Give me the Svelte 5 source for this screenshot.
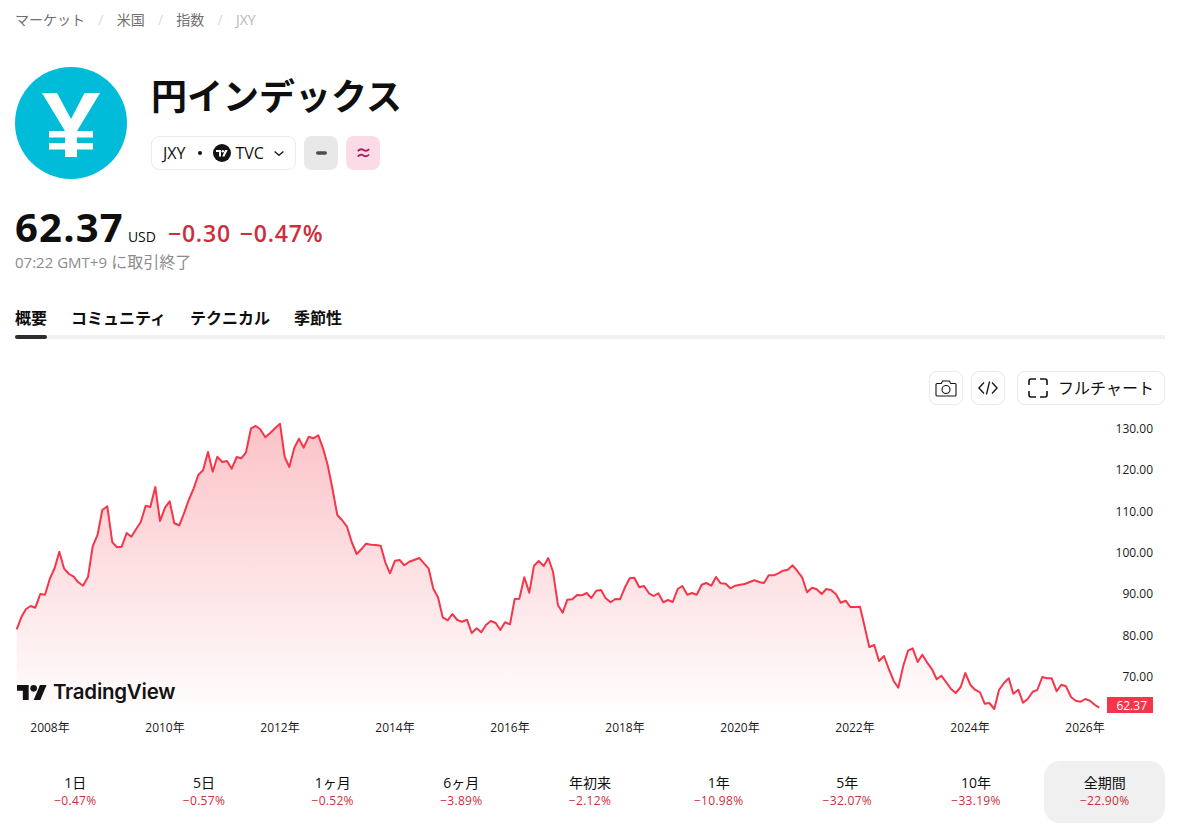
<script>
	// Points were read off the chart as [x, y] pairs from three crops (3x scale),
	// seg() brings them back to page pixels.
	function seg(ox, oy, raw) {
		const out = [];
		for (let i = 0; i < raw.length; i += 2) {
			out.push([+(ox + raw[i] / 3).toFixed(1), +(oy + raw[i + 1] / 3).toFixed(1)]);
		}
		return out;
	}

	const points = [
		...seg(0, 410, [50,658,64,622,78,597,92,588,106,593,121,552,135,554,150,505,164,474,178,425,192,475,207,492,221,500,235,517,249,527,264,501,278,409,293,373,307,300,322,289,337,397,351,412,365,410,380,369,394,380,408,358,422,337,437,287,451,291,466,231,480,333,495,293,509,274,523,340,538,346,552,310,566,270,581,235,595,195,609,181,624,126,638,185,652,140,667,156,681,153,695,176,710,141,724,145,738,127,753,55,767,48,781,58,796,82,810,70,825,55,840,41,854,141,868,171,883,113,897,86,911,113,926,80,940,85,955,76,969,115,983,165,998,240,1012,315,1026,330,1041,350,1055,396,1070,432,1084,418,1098,401,1113,404,1127,405]),
		...seg(380, 500, [2,137,16,187,30,220,45,182,59,180,73,196,88,185,102,180,118,174,132,190,146,206,160,266,174,292,188,352,203,361,217,342,232,360,246,365,261,359,275,399,290,385,304,397,318,375,332,363,347,369,361,390,375,367,390,373,404,297,418,296,433,232,448,278,462,197,476,183,491,198,505,174,519,215,534,316,548,338,562,299,577,298,591,285,605,286,620,279,634,294,649,272,663,270,677,295,692,307,706,297,720,298,735,262,749,235,763,233,778,262,792,258,807,280,821,288,835,280,850,307,864,300,878,306,893,267,907,258,922,284,936,279,950,284,965,254,979,249,994,257,1008,231,1022,250,1037,251,1051,265,1066,257,1080,254,1094,252,1109,246,1123,241]),
		...seg(760, 550, [0,97,12,99,26,76,41,76,55,70,69,62,83,59,98,46,112,63,127,83,141,127,156,113,170,118,185,132,199,117,213,120,228,133,242,158,257,152,271,171,285,171,300,170,314,230,328,291,343,285,357,333,372,318,386,356,401,393,415,413,430,347,444,302,458,295,473,336,487,314,501,337,516,358,530,388,544,377,559,397,573,417,587,429,602,411,616,369,631,404,645,419,660,427,674,461,688,459,703,477,717,420,732,399,746,385,760,431,775,419,789,458,803,447,818,425,832,420,847,381,861,385,875,385,890,424,904,404,918,409,933,441,947,452,962,455,976,447,990,452,1005,465,1018,473])
	];

	const linePts = points.map((p) => p.join(',')).join(' ');
	const first = points[0];
	const last = points[points.length - 1];
	const areaPts = `${first[0]},710 ${linePts} ${last[0]},710`;

	const crumbs = ['マーケット', '米国', '指数'];
	const tabs = ['概要', 'コミュニティ', 'テクニカル', '季節性'];
	const yTicks = [
		['130.00', 433], ['120.00', 474], ['110.00', 516], ['100.00', 557],
		['90.00', 598], ['80.00', 640], ['70.00', 681]
	];
	const years = [2008, 2010, 2012, 2014, 2016, 2018, 2020, 2022, 2024, 2026];
	const ranges = [
		['1日', '−0.47%'], ['5日', '−0.57%'], ['1ヶ月', '−0.52%'],
		['6ヶ月', '−3.89%'], ['年初来', '−2.12%'], ['1年', '−10.98%'],
		['5年', '−32.07%'], ['10年', '−33.19%'], ['全期間', '−22.90%']
	];
</script>

<div class="page">
	<nav class="crumbs">
		{#each crumbs as c}
			<span>{c}</span><span class="sep">/</span>
		{/each}
		<span class="current">JXY</span>
	</nav>

	<header class="head">
		<svg class="logo" viewBox="15 67 112 112" width="112" height="112" aria-hidden="true">
			<circle cx="71" cy="123" r="56" fill="#00bcd9" />
			<path fill="#fff" d="M42 93h15l14 26 13.500-26H100L77 131v26H65v-26z" />
			<path fill="#fff" d="M49 131h44v6.500H49zM49 143h44v6.500H49z" />
		</svg>
		<div class="head-main">
			<h1>円インデックス</h1>
			<div class="chips">
				<button type="button" class="chip">
					<span>JXY</span>
					<span class="dot"></span>
					<svg class="tvc" viewBox="0 0 18 18" width="18" height="18" aria-hidden="true">
						<circle cx="9" cy="9" r="9" fill="#131313" />
						<path fill="#fff" d="M3 6h5v6.500H6V8H3zM11.500 12.500H9.300L12 6h2.600z" />
						<circle cx="9.800" cy="7.200" r="1.200" fill="#fff" />
					</svg>
					<span>TVC</span>
					<svg class="chev" viewBox="0 0 10 5" width="10" height="5" aria-hidden="true">
						<path d="M.6.600 5 4.300 9.400.6" fill="none" stroke="#131313" stroke-width="1.300" />
					</svg>
				</button>
				<span class="flag grey">
					<svg viewBox="0 0 12 4" width="11" height="4" aria-hidden="true"><rect width="12" height="4" rx="2" fill="#4c4c4c" /></svg>
				</span>
				<span class="flag pink">
					<svg viewBox="0 0 13 10" width="13" height="10" aria-hidden="true">
						<path d="M.8 3.200C3 .8 5 1 6.500 2s3.700 1.200 5.700-.9M.8 8.600C3 6.200 5 6.400 6.500 7.400s3.700 1.200 5.700-.9" fill="none" stroke="#b5185f" stroke-width="1.800" />
					</svg>
				</span>
			</div>
		</div>
	</header>

	<section class="quote">
		<div class="quote-row">
			<span class="price">62.37</span>
			<span class="cur">USD</span>
			<span class="chg">−0.30</span>
			<span class="chg">−0.47%</span>
		</div>
		<div class="time"><span class="time-latin">07:22 GMT+9</span> に取引終了</div>
	</section>

	<div class="tabs">
		{#each tabs as t, i}
			<span class="tab" class:active={i === 0}>{t}</span>
		{/each}
	</div>

	<div class="tools">
		<button type="button" class="tool" aria-label="スナップショット">
			<svg viewBox="0 0 22 17" width="22" height="17" aria-hidden="true">
				<path d="M1 15V4.500a1 1 0 0 1 1-1h4.300L7.600 1h6.800l1.300 2.500H20a1 1 0 0 1 1 1V15a1 1 0 0 1-1 1H2a1 1 0 0 1-1-1z" fill="none" stroke="#131313" stroke-width="1.100" />
				<circle cx="11" cy="9.500" r="4" fill="none" stroke="#131313" stroke-width="1.100" />
			</svg>
		</button>
		<button type="button" class="tool" aria-label="埋め込み">
			<svg viewBox="0 0 20 14" width="20" height="14" aria-hidden="true">
				<path d="M6 1.500.9 7 6 12.500M14 1.500 19.100 7 14 12.500M11.600.5 8.400 13.500" fill="none" stroke="#131313" stroke-width="1.300" />
			</svg>
		</button>
		<button type="button" class="tool wide">
			<svg viewBox="0 0 20 20" width="20" height="20" aria-hidden="true">
				<path d="M1 7V3a2 2 0 0 1 2-2h5M12 1h5a2 2 0 0 1 2 2v4M19 13v4a2 2 0 0 1-2 2h-5M8 19H3a2 2 0 0 1-2-2v-4" fill="none" stroke="#131313" stroke-width="1.600" />
			</svg>
			<span class="tool-label">フルチャート</span>
		</button>
	</div>

	<div class="chart">
		<svg viewBox="15 410 1150 335" width="1150" height="335" aria-label="JXY chart">
			<defs>
				<linearGradient id="areaFill" gradientUnits="userSpaceOnUse" x1="0" y1="424" x2="0" y2="710">
					<stop offset="0" stop-color="#f23645" stop-opacity="0.3" />
					<stop offset="1" stop-color="#f23645" stop-opacity="0.01" />
				</linearGradient>
			</defs>
			<polygon points={areaPts} fill="url(#areaFill)" />
			<polyline points={linePts} fill="none" stroke="#f5364a" stroke-width="2" stroke-linejoin="round" />
			{#each yTicks as [label, y]}
				<text class="axis" x="1153" {y} text-anchor="end">{label}</text>
			{/each}
			{#each years as yr, i}
				<text class="axis" x={50 + i * 115} y="732" text-anchor="middle">{yr}年</text>
			{/each}
			<rect x="1107" y="697" width="46" height="16" fill="#f5364a" />
			<text class="axis badge" x="1147" y="709.500" text-anchor="end">62.37</text>
		</svg>
		<div class="brand">
			<svg viewBox="0 0 36 18" width="30" height="15" aria-hidden="true">
				<path fill="#131313" d="M14 18H7V7H0V0h14zM28 18h-8L27.500 0h8z" />
				<circle cx="20" cy="4" r="4" fill="#131313" />
			</svg>
			<span>TradingView</span>
		</div>
	</div>

	<div class="ranges">
		{#each ranges as [label, pct], i}
			<div class="range" class:on={i === ranges.length - 1}>
				<span class="r-label">{label}</span>
				<span class="r-pct">{pct}</span>
			</div>
		{/each}
	</div>
</div>

<style>
	:global(body) {
		margin: 0;
		background: #fff;
	}
	.page {
		width: 1150px;
		height: 825px;
		padding: 0 15px;
		overflow: hidden;
		color: #0f0f0f;
		font-family: "Open Sans", "Noto Sans CJK JP", sans-serif;
	}
	.crumbs {
		display: flex;
		gap: 12px;
		height: 38px;
		align-items: center;
		font-size: 14px;
		color: #707070;
	}
	.crumbs .sep {
		color: #dbdbdb;
		margin: 0 1.25px;
	}
	.crumbs .current {
		color: #b8b8b8;
	}
	.head {
		display: flex;
		gap: 25px;
		margin-top: 29px;
	}
	.logo {
		display: block;
		flex: none;
	}
	.head-main {
		display: flex;
		flex-direction: column;
	}
	h1 {
		margin: 6px 0 0 -1px;
		height: 47px;
		line-height: 47px;
		font-size: 36px;
		font-weight: 700;
	}
	.chips {
		display: flex;
		gap: 8px;
		margin-top: 16px;
		margin-left: -1px;
	}
	.chip {
		display: flex;
		align-items: center;
		height: 34px;
		width: 145px;
		box-sizing: border-box;
		padding: 0 11px;
		background: #fff;
		border: 1px solid #ebebeb;
		border-radius: 8px;
		font: inherit;
		font-size: 16px;
		color: #0f0f0f;
	}
	.dot {
		width: 4px;
		height: 4px;
		border-radius: 50%;
		background: #0f0f0f;
		margin: 0 11px 0 13px;
	}
	.tvc {
		margin-right: 4px;
	}
	.chev {
		margin-left: auto;
	}
	.flag {
		display: flex;
		align-items: center;
		justify-content: center;
		width: 34px;
		height: 34px;
		border-radius: 8px;
	}
	.grey {
		background: #e8e8e8;
	}
	.pink {
		background: #fbdbe8;
	}
	.quote {
		margin-top: 20px;
	}
	.quote-row {
		display: flex;
		align-items: baseline;
		height: 56px;
	}
	.price {
		font-size: 40px;
		line-height: 56px;
		font-weight: 700;
		letter-spacing: 1.2px;
	}
	.cur {
		font-size: 14px;
		margin: 0 12px 0 4px;
	}
	.chg {
		font-size: 23px;
		font-weight: 600;
		letter-spacing: 0.8px;
		color: #cc2f3c;
		margin-right: 9px;
	}
	.time {
		font-size: 16px;
		line-height: 20px;
		margin-top: -3px;
		color: #8c8c8c;
	}
	.time-latin {
		font-size: 15px;
	}
	.tabs {
		display: flex;
		gap: 24px;
		margin-top: 34px;
		height: 29px;
		border-bottom: 4px solid #f0f0f0;
		position: relative;
	}
	.tab {
		font-size: 16px;
		font-weight: 700;
		line-height: 24px;
		height: 29px;
		position: relative;
	}
	.tab.active::after {
		content: "";
		position: absolute;
		left: 0;
		right: 0;
		bottom: -4px;
		height: 4px;
		border-radius: 2px;
		background: #2e2e2e;
	}
	.tools {
		display: flex;
		justify-content: flex-end;
		gap: 8px;
		margin-top: 32px;
		height: 34px;
	}
	.tool {
		display: flex;
		align-items: center;
		justify-content: center;
		width: 34px;
		height: 34px;
		padding: 0;
		background: #fff;
		border: 1px solid #ebebeb;
		border-radius: 8px;
		font: inherit;
		font-size: 16px;
		color: #0f0f0f;
	}
	.tool.wide {
		width: 148px;
		margin-left: 4px;
		gap: 10px;
	}
	.tool-label {
		padding-bottom: 3px;
	}
	.chart {
		position: relative;
		height: 335px;
		margin-top: 5px;
	}
	.chart svg {
		display: block;
	}
	.axis {
		font-family: "Open Sans", "Noto Sans CJK JP", sans-serif;
		font-size: 12px;
		fill: #1a1a1a;
	}
	.badge {
		fill: #fff;
	}
	.brand {
		position: absolute;
		left: 2px;
		top: 270px;
		display: flex;
		align-items: center;
		gap: 6px;
		font-family: Inter, sans-serif;
		font-size: 20.5px;
		font-weight: 600;
		letter-spacing: -0.25px;
		line-height: 24px;
		color: #131313;
	}
	.ranges {
		display: grid;
		grid-template-columns: repeat(9, 1fr);
		gap: 8px;
		margin-top: 16px;
	}
	.range {
		display: flex;
		flex-direction: column;
		align-items: center;
		justify-content: center;
		height: 62px;
		border-radius: 16px;
	}
	.range.on {
		background: #f0f0f0;
	}
	.r-label {
		font-size: 14px;
		line-height: 18px;
	}
	.r-pct {
		font-size: 12px;
		line-height: 18px;
		letter-spacing: 0.3px;
		color: #cc2f3c;
	}
</style>
